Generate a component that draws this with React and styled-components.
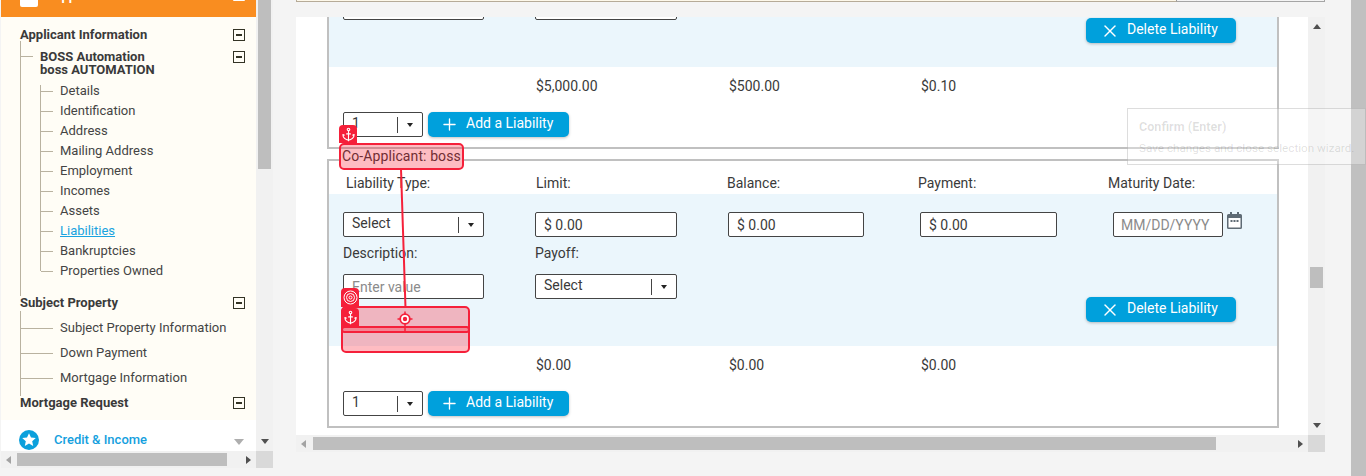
import React from "react";
import styled, { createGlobalStyle } from "styled-components";
import { Anchor, Plus, X } from "lucide-react";

const Global = createGlobalStyle`
  html, body { margin: 0; padding: 0; background: #f4f4f4; }
  * { box-sizing: border-box; }
  body { font-family: Roboto, "Liberation Sans", sans-serif; font-size: 14px; color: #3a3a3a; }
`;

const Page = styled.div`
  position: relative;
  display: flex;
  width: 1366px;
  height: 476px;
  overflow: hidden;
  background: #f4f4f4;
`;

/* ---------- scrollbars ---------- */
const VTrack = styled.div`
  display: flex;
  flex-direction: column;
  align-items: center;
  width: 17px;
  background: #f1f1f1;
`;
const HTrack = styled.div`
  display: flex;
  align-items: center;
  height: 17px;
  background: #f1f1f1;
`;
const Corner = styled.div`
  width: 17px;
  height: 17px;
  background: #d9d9d9;
`;
const Arrow = styled.span`
  flex: none;
  width: 0;
  height: 0;
  border-style: solid;
  border-color: transparent;
  ${(p) => (p.$dir === "up" ? "border-width: 0 4.5px 5px; border-bottom-color: #505050;" : "")}
  ${(p) => (p.$dir === "down" ? "border-width: 5px 4.5px 0; border-top-color: #505050;" : "")}
  ${(p) => (p.$dir === "left" ? "border-width: 4.5px 5px 4.5px 0; border-right-color: #a3a3a3;" : "")}
  ${(p) => (p.$dir === "right" ? "border-width: 4.5px 0 4.5px 5px; border-left-color: #505050;" : "")}
`;
const VThumb = styled.div`
  width: 13px;
  height: ${(p) => p.$h}px;
  margin-top: ${(p) => p.$top}px;
  flex: none;
  background: #bebebe;
`;
const HThumb = styled.div`
  height: 13px;
  flex: none;
  width: ${(p) => p.$w}px;
  margin-left: ${(p) => p.$left}px;
  background: #bebebe;
`;
const Spacer = styled.div`
  flex: 1;
`;
const EndGapV = styled.div`
  height: 7px;
  flex: none;
`;
const EndGapH = styled.div`
  width: 5px;
  flex: none;
`;

/* ---------- left column ---------- */
const LeftCol = styled.div`
  flex: none;
  display: grid;
  grid-template-columns: 255px 17px;
  grid-template-rows: 451px 17px;
  width: 272px;
  margin-left: 1px;
`;
const Sidebar = styled.div`
  overflow: hidden;
  background: #fff;
`;
const OrangeHead = styled.div`
  display: flex;
  align-items: flex-end;
  height: 17px;
  padding: 0 11px 0 19px;
  background: #f98d20;
  overflow: hidden;
`;
const HeadIcon = styled.div`
  width: 18px;
  height: 24px;
  margin-bottom: 10px;
  flex: none;
  border-radius: 2px;
  background: #fff;
`;
const HeadText = styled.div`
  margin: 0 0 13px 15px;
  flex: 1;
  color: #fff;
  font-weight: 700;
  font-size: 13px;
  line-height: 16px;
  white-space: nowrap;
`;
const HeadBox = styled.div`
  width: 12px;
  height: 13px;
  margin-bottom: 16px;
  flex: none;
  border: 2px solid #fff;
  border-radius: 1px;
`;
const Tree = styled.div`
  height: 403px;
  padding-top: 9px;
  background: #fffdf6;
`;
const Section = styled.div`
  position: relative;
  display: flex;
  justify-content: space-between;
  align-items: flex-start;
  padding: 0 11px 0 19px;
  height: ${(p) => p.$h}px;
  font-weight: 700;
  font-size: 13px;
  line-height: 18px;
  color: #3a3a3a;
`;
const Person = styled(Section)`
  height: 31px;
  padding-left: 20px;
  padding-right: 11px;
  line-height: 13px;
  &::before {
    content: "";
    position: absolute;
    left: 1px;
    top: 6px;
    width: 12px;
    height: 1px;
    background: #b9b2a0;
  }
`;
const ToggleBox = styled.span`
  position: relative;
  flex: none;
  width: 12px;
  height: 12px;
  margin-top: ${(p) => p.$top}px;
  border: 1px solid #333325;
  background: #fffdf6;
  &::after {
    content: "";
    position: absolute;
    left: 2px;
    right: 2px;
    top: 4px;
    height: 2px;
    background: #333325;
  }
`;
const Branch = styled.div`
  position: relative;
  margin-left: 19px;
  padding-bottom: ${(p) => p.$pb || 0}px;
  &::before {
    content: "";
    position: absolute;
    left: 0;
    top: ${(p) => p.$top}px;
    bottom: ${(p) => p.$bottom}px;
    width: 1px;
    background: #b9b2a0;
  }
`;
const Leaves = styled.div`
  position: relative;
  margin-left: 20px;
  padding-bottom: 13px;
  &::before {
    content: "";
    position: absolute;
    left: 0;
    top: 4px;
    bottom: 23px;
    width: 1px;
    background: #b9b2a0;
  }
`;
const Leaf = styled.div`
  position: relative;
  height: ${(p) => p.$h}px;
  line-height: ${(p) => p.$h}px;
  padding-left: ${(p) => p.$pad}px;
  font-size: 13px;
  white-space: nowrap;
  color: ${(p) => (p.$active ? "#1aa3e0" : "#444444")};
  text-decoration: ${(p) => (p.$active ? "underline" : "none")};
  &::before {
    content: "";
    position: absolute;
    left: 1px;
    top: 50%;
    width: ${(p) => p.$pad - 8}px;
    height: 1px;
    background: #b9b2a0;
  }
`;
const CreditRow = styled.div`
  display: flex;
  align-items: center;
  height: 31px;
  padding: 9px 12px 0 18px;
  background: #fff;
  color: #14a0de;
  font-weight: 500;
  font-size: 13px;
`;
const CreditText = styled.span`
  flex: 1;
  margin-left: 15px;
  margin-top: -1px;
`;
const SmallCaret = styled.span`
  width: 0;
  height: 0;
  margin-top: 4px;
  border-style: solid;
  border-width: 6px 5px 0;
  border-color: #aeaeae transparent transparent;
`;

/* ---------- main column ---------- */
const MainCol = styled.div`
  flex: none;
  width: 1029px;
  margin-left: 23px;
  display: grid;
  grid-template-columns: 1012px 17px;
  grid-template-rows: 17px 418px 17px;
`;
const TopStrip = styled.div`
  grid-column: 1 / 3;
  display: grid;
  grid-template-columns: 881px 1fr;
  align-items: start;
`;
const TopTab = styled.div`
  height: 2px;
  background: #fdf8ea;
  border-bottom: 1px solid #b6ab98;
  border-right: 1px solid #9a9a9a;
  border-left: 1px solid #b6ab98;
`;
const TopTabPlain = styled.div`
  height: 2px;
  border-bottom: 1px solid #a5a5a5;
  border-right: 1px solid #a5a5a5;
`;
const Panel = styled.div`
  overflow: hidden;
  background: #fff;
`;
const Scrolled = styled.div`
  margin-top: -144px;
  margin-left: 31px;
  width: 952px;
`;
const Fieldset = styled.fieldset`
  display: block;
  margin: 0 0 3px;
  padding: 0;
  min-width: 0;
  width: 952px;
  height: 276px;
  border: 2px solid #c0c0c0;
`;
const Legend = styled.legend`
  margin-left: 10px;
  padding: 0 3px;
  height: 16px;
  line-height: 8px;
  font-size: 14px;
  letter-spacing: 0.1px;
  color: #3a3a3a;
  white-space: nowrap;
`;
const LabelRow = styled.div`
  display: grid;
  grid-template-columns: 190px 191px 191px 190px 1fr;
  padding: 5px 0 0 17px;
  height: 26px;
`;
const Label = styled.div`
  font-size: 14px;
  line-height: 20px;
  color: #3a3a3a;
  white-space: nowrap;
`;
const Band = styled.div`
  padding: 18px 41px 24px 14px;
  height: 152px;
  background: #ebf6fc;
`;
const FieldRow = styled.div`
  display: grid;
  grid-template-columns: 192px 193px 192px 193px 1fr;
  align-items: start;
`;
const SecondLabels = styled.div`
  display: grid;
  grid-template-columns: 192px 1fr;
  height: 37px;
  padding-top: 6px;
`;
const LastRow = styled.div`
  display: grid;
  grid-template-columns: 192px 1fr 150px;
  align-items: start;
  height: 48px;
`;
const BoxBase = styled.div`
  display: flex;
  align-items: center;
  height: 25px;
  width: ${(p) => p.$w}px;
  border: 1px solid #444;
  border-radius: 2px;
  background: #fff;
  font-size: 14px;
  white-space: nowrap;
  color: ${(p) => (p.$ph ? "#8b8b8b" : "#3a3a3a")};
`;
const TextBox = styled(BoxBase)`
  padding-left: 8px;
`;
const DateBox = styled(BoxBase)`
  padding-left: 7px;
`;
const SelectBox = styled(BoxBase)`
  padding-left: 8px;
`;
const SelectText = styled.span`
  flex: 1;
  margin-top: -3px;
`;
const SelectDivider = styled.span`
  width: 1px;
  height: 16px;
  background: #444;
`;
const SelectCaret = styled.span`
  display: flex;
  justify-content: center;
  width: 24px;
  &::after {
    content: "";
    border-style: solid;
    border-width: 4px 3.5px 0;
    border-color: #222 transparent transparent;
  }
`;
const DateWrap = styled.div`
  display: flex;
  align-items: flex-start;
  gap: 4px;
`;
const Calendar = styled.svg`
  width: 15px;
  height: 17px;
  flex: none;
`;
const Button = styled.div`
  display: flex;
  align-items: center;
  justify-self: end;
  width: ${(p) => p.$w}px;
  height: 25px;
  padding-left: ${(p) => p.$pad}px;
  gap: ${(p) => p.$gap}px;
  border-radius: 5px;
  background: #00a0dc;
  color: #fff;
  font-size: 14px;
  font-weight: 400;
  white-space: nowrap;
  box-shadow: 0 1px 3px rgba(0, 0, 0, 0.25);
`;
const ButtonLabel = styled.span`
  margin-top: -4px;
`;
const DeleteWrap = styled.div`
  margin-top: 23px;
`;
const Totals = styled.div`
  display: grid;
  grid-template-columns: 193px 192px 192px;
  padding-left: 207px;
  height: 45px;
  padding-top: 9px;
  font-size: 14px;
  line-height: 20px;
`;
const AddRow = styled.div`
  display: flex;
  gap: 5px;
  padding-left: 14px;
`;

/* ---------- overlays ---------- */
const Overlay = styled.div`
  position: absolute;
  left: ${(p) => p.$x}px;
  top: ${(p) => p.$y}px;
  width: ${(p) => p.$w}px;
  height: ${(p) => p.$h}px;
`;
const Outline = styled(Overlay)`
  border: 2px solid #f5203a;
  border-radius: 5px;
  background: rgba(250, 15, 35, 0.28);
`;
const Tag = styled(Overlay)`
  display: flex;
  align-items: center;
  justify-content: center;
  background: #f5203a;
  color: #fff;
  border-radius: 4px 4px 0 0;
`;
const Wire = styled.svg`
  position: absolute;
  left: 395px;
  top: 165px;
  overflow: visible;
`;
const Crosshair = styled.svg`
  position: absolute;
  left: 397px;
  top: 311px;
`;
const Tip = styled(Overlay)`
  padding: 10px 11px;
  border: 1px solid rgba(120, 120, 120, 0.25);
  background: rgba(255, 255, 255, 0.3);
  color: rgba(0, 0, 0, 0.13);
  white-space: nowrap;
`;
const TipTitle = styled.div`
  font-weight: 700;
  font-size: 12.6px;
  line-height: 16px;
  margin-bottom: 5px;
`;
const TipBody = styled.div`
  font-size: 11.7px;
  line-height: 16px;
`;

const PageBar = styled.div`
  position: absolute;
  right: 0;
  top: 0;
  bottom: 0;
  width: 15px;
  background: #c0c0c0;
`;

function Select({ w, text, ph }) {
  return (
    <SelectBox $w={w} $ph={ph}>
      <SelectText>{text}</SelectText>
      <SelectDivider />
      <SelectCaret />
    </SelectBox>
  );
}

function Group({ legend, totals }) {
  return (
    <Fieldset>
      <Legend>{legend}</Legend>
      <LabelRow>
        <Label>Liability Type:</Label>
        <Label>Limit:</Label>
        <Label>Balance:</Label>
        <Label>Payment:</Label>
        <Label>Maturity Date:</Label>
      </LabelRow>
      <Band>
        <FieldRow>
          <Select w={141} text="Select" />
          <TextBox $w={142}>$ 0.00</TextBox>
          <TextBox $w={136}>$ 0.00</TextBox>
          <TextBox $w={137}>$ 0.00</TextBox>
          <DateWrap>
            <DateBox $w={110} $ph>MM/DD/YYYY</DateBox>
            <Calendar viewBox="0 0 15 17">
              <rect x="1" y="5" width="13" height="11" fill="#fff" />
              <path
                fill="#5f6b75"
                d="M3 0h2v2h5V0h2v2h1.500A1.500 1.500 0 0 1 15 3.500v12a1.500 1.500 0 0 1-1.500 1.500h-12A1.500 1.500 0 0 1 0 15.500v-12A1.500 1.500 0 0 1 1.500 2H3zM1.500 6v9.500h12V6z"
              />
              <path fill="#5f6b75" d="M3.500 8h2v2h-2zM6.500 8h2v2h-2zM9.500 8h2v2h-2z" />
            </Calendar>
          </DateWrap>
        </FieldRow>
        <SecondLabels>
          <Label>Description:</Label>
          <Label>Payoff:</Label>
        </SecondLabels>
        <LastRow>
          <TextBox $w={141} $ph>Enter value</TextBox>
          <Select w={142} text="Select" />
          <DeleteWrap>
            <Button $w={150} $pad={14} $gap={7}>
              <X size={20} strokeWidth={1.7} />
              <ButtonLabel>Delete Liability</ButtonLabel>
            </Button>
          </DeleteWrap>
        </LastRow>
      </Band>
      <Totals>
        {totals.map((t) => (
          <span key={t}>{t}</span>
        ))}
      </Totals>
      <AddRow>
        <Select w={80} text="1" />
        <Button $w={141} $pad={12} $gap={7}>
          <Plus size={19} strokeWidth={1.7} />
          <ButtonLabel>Add a Liability</ButtonLabel>
        </Button>
      </AddRow>
    </Fieldset>
  );
}

const applicantLeaves = [
  "Details",
  "Identification",
  "Address",
  "Mailing Address",
  "Employment",
  "Incomes",
  "Assets",
  "Liabilities",
  "Bankruptcies",
  "Properties Owned",
];

export default function App() {
  return (
    <Page>
      <Global />
      <LeftCol>
        <Sidebar>
          <OrangeHead>
            <HeadIcon />
            <HeadText>Application Details</HeadText>
            <HeadBox />
          </OrangeHead>
          <Tree>
            <Section $h={24}>
              Applicant Information
              <ToggleBox $top={3} />
            </Section>
            <Branch $top={-9} $bottom={-2}>
              <Person>
                <div>
                  BOSS Automation
                  <br />
                  boss AUTOMATION
                </div>
                <ToggleBox $top={1} />
              </Person>
              <Leaves>
                {applicantLeaves.map((l) => (
                  <Leaf key={l} $h={20} $pad={20} $active={l === "Liabilities"}>
                    {l}
                  </Leaf>
                ))}
              </Leaves>
            </Branch>
            <Section $h={21}>
              Subject Property
              <ToggleBox $top={3} />
            </Section>
            <Branch $top={-4} $bottom={-2} $pb={4}>
              <Leaf $h={25} $pad={40}>Subject Property Information</Leaf>
              <Leaf $h={25} $pad={40}>Down Payment</Leaf>
              <Leaf $h={25} $pad={40}>Mortgage Information</Leaf>
            </Branch>
            <Section $h={18}>
              Mortgage Request
              <ToggleBox $top={3} />
            </Section>
          </Tree>
          <CreditRow>
            <svg width="20" height="20" viewBox="0 0 20 20">
              <circle cx="10" cy="10" r="10" fill="#0ba0dc" />
              <path
                fill="#fff"
                d="M10 3.200l2 4.400 4.800.500-3.600 3.200 1 4.700L10 13.600 5.800 16l1-4.700L3.200 8.100 8 7.600z"
              />
            </svg>
            <CreditText>Credit &amp; Income</CreditText>
            <SmallCaret />
          </CreditRow>
        </Sidebar>
        <VTrack>
          <VThumb $top={0} $h={169} />
          <Spacer />
          <Arrow $dir="down" />
          <EndGapV />
        </VTrack>
        <HTrack>
          <EndGapH />
          <Arrow $dir="left" />
          <HThumb $left={6} $w={210} />
          <Spacer />
          <Arrow $dir="right" />
          <EndGapH />
        </HTrack>
        <Corner />
      </LeftCol>

      <MainCol>
        <TopStrip>
          <TopTab />
          <TopTabPlain />
        </TopStrip>
        <Panel>
          <Scrolled>
            <Group legend="Applicant: BOSS" totals={["$5,000.00", "$500.00", "$0.10"]} />
            <Group legend="Co-Applicant: boss" totals={["$0.00", "$0.00", "$0.00"]} />
          </Scrolled>
        </Panel>
        <VTrack>
          <EndGapV />
          <Arrow $dir="up" />
          <VThumb $top={238} $h={21} />
          <Spacer />
          <Arrow $dir="down" />
          <EndGapV />
        </VTrack>
        <HTrack>
          <EndGapH />
          <Arrow $dir="left" />
          <HThumb $left={7} $w={903} />
          <Spacer />
          <Arrow $dir="right" />
          <EndGapH />
        </HTrack>
        <Corner />
      </MainCol>

      <PageBar />

      <Wire width="20" height="150">
        <path d="M6 4 L10.500 143" stroke="#f5203a" strokeWidth="2" fill="none" />
      </Wire>
      <Outline $x={339} $y={143} $w={125} $h={27} />
      <Tag $x={339} $y={125} $w={18} $h={18}>
        <Anchor size={15} strokeWidth={1.8} />
      </Tag>
      <Outline $x={341} $y={306} $w={129} $h={47} />
      <Outline $x={341} $y={326} $w={129} $h={7} />
      <Tag $x={341} $y={288} $w={18} $h={19}>
        <svg width="15" height="15" viewBox="0 0 15 15" fill="none" stroke="#fff">
          <circle cx="7.500" cy="7.500" r="6.500" />
          <circle cx="7.500" cy="7.500" r="4" />
          <circle cx="7.500" cy="7.500" r="1.500" />
        </svg>
      </Tag>
      <Tag $x={341} $y={308} $w={18} $h={19}>
        <Anchor size={15} strokeWidth={1.8} />
      </Tag>
      <Crosshair width="16" height="22" viewBox="0 0 16 22">
        <circle cx="8" cy="8" r="4.800" fill="#fff" stroke="#f5203a" strokeWidth="1.800" />
        <circle cx="8" cy="8" r="2.200" fill="#f5203a" />
        <path d="M8 0.500v3M8 12.500v9M0.500 8h3M12.500 8h3" stroke="#f5203a" strokeWidth="1.500" />
      </Crosshair>
      <Tip $x={1127} $y={108} $w={239} $h={57}>
        <TipTitle>Confirm (Enter)</TipTitle>
        <TipBody>Save changes and close selection wizard.</TipBody>
      </Tip>
    </Page>
  );
}
